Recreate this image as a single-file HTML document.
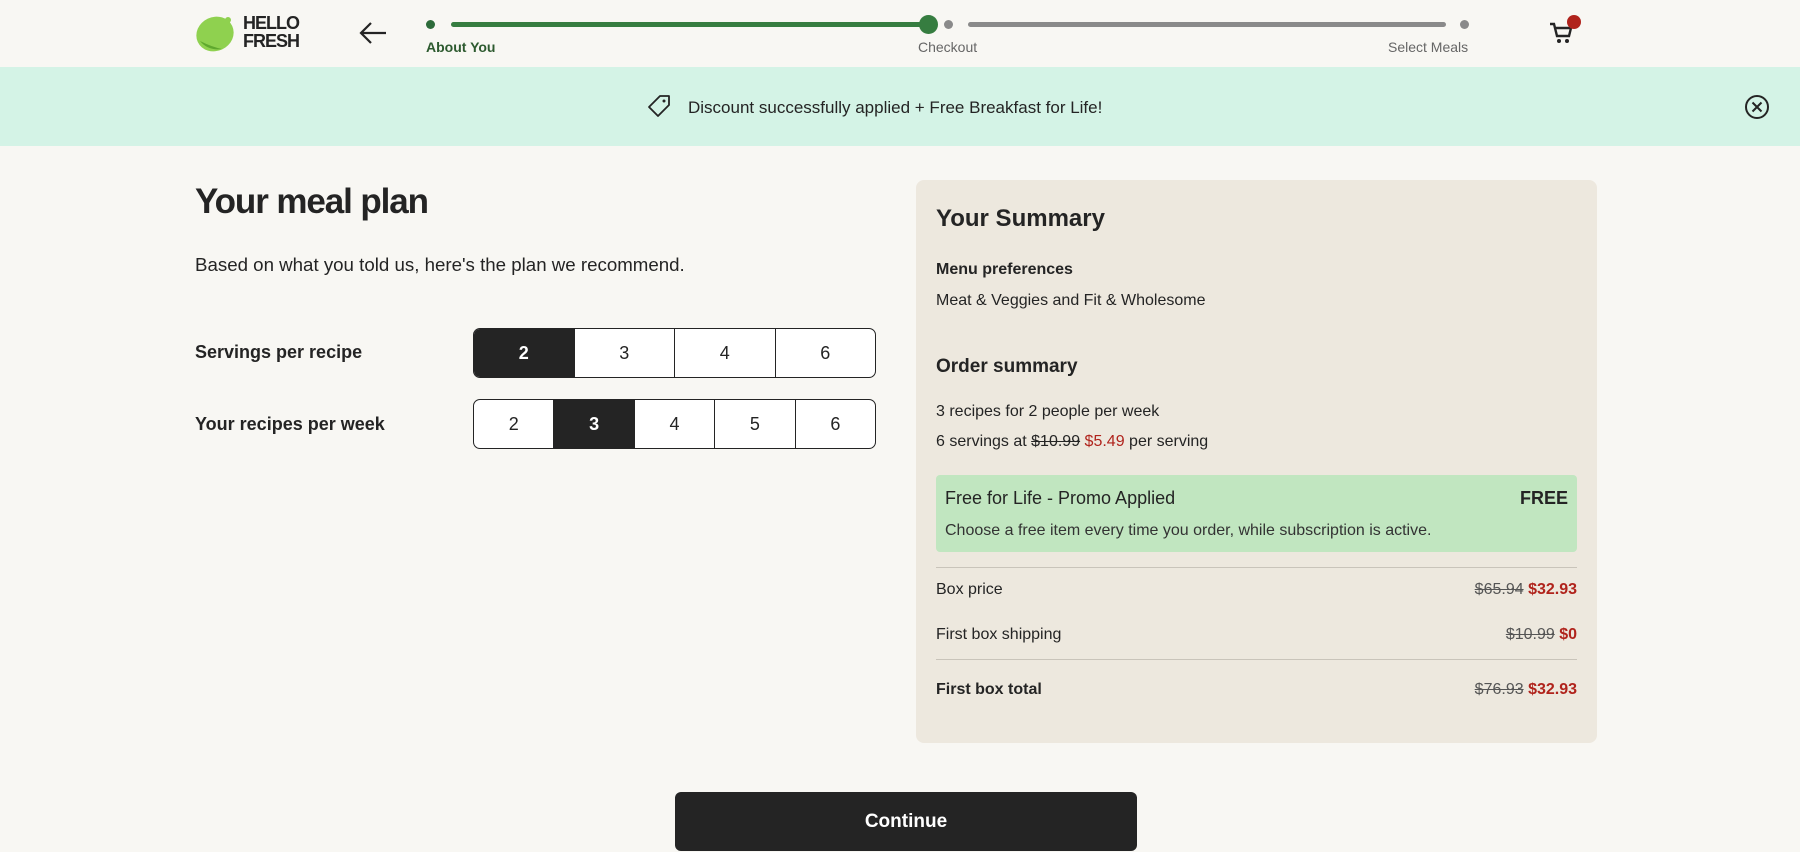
<!DOCTYPE html>
<html><head><meta charset="utf-8">
<style>
*{margin:0;padding:0;box-sizing:border-box}
body{width:1800px;height:852px;overflow:hidden;background:#f8f7f3;font-family:"Liberation Sans",sans-serif;color:#242424;position:relative}
.a{position:absolute;white-space:nowrap}
.hdr{position:absolute;left:0;top:0;width:1800px;height:67px;background:#f8f7f3}
.ban{position:absolute;left:0;top:67px;width:1800px;height:79px;background:#d4f3e6}
.seg{position:absolute;display:flex;border:1.5px solid #242424;border-radius:7px;overflow:hidden;background:#fff}
.seg div{flex:1;display:flex;align-items:center;justify-content:center;font-size:18px;border-left:1.5px solid #242424}
.seg div:first-child{border-left:none}
.seg .on{background:#242424;color:#fff;font-weight:bold}
.card{position:absolute;left:916px;top:180px;width:681px;height:563px;background:#ede8de;border-radius:8px}
.s{text-decoration:line-through;color:#555}
.r{color:#b0231c}
.rb{color:#b0231c;font-weight:bold}
</style></head><body>
<div class="hdr"></div>
<svg class="a" style="left:194px;top:13px" width="42" height="40" viewBox="0 0 42 40">
<ellipse cx="21" cy="21" rx="19" ry="17" transform="rotate(-25 21 21)" fill="#8fd14f"/>
<path d="M6 28 Q14 38 28 36 Q18 34 6 28Z" fill="#5fa82e"/>
<circle cx="34" cy="7" r="3" fill="#8fd14f"/>
</svg>
<div class="a" style="left:243px;top:14px;font-weight:900;font-size:18px;line-height:18px;letter-spacing:-1px">HELLO<br>FRESH</div>
<svg class="a" style="left:358px;top:21px" width="30" height="24" viewBox="0 0 30 24"><path d="M28 12H3M13 2L3 12l10 10" fill="none" stroke="#242424" stroke-width="2.2"/></svg>
<div class="a" style="left:426px;top:20px;width:9px;height:9px;border-radius:50%;background:#2d6b3a"></div>
<div class="a" style="left:451px;top:22px;width:471px;height:5px;border-radius:3px;background:#367d40"></div>
<div class="a" style="left:919px;top:15px;width:19px;height:19px;border-radius:50%;background:#367d40"></div>
<div class="a" style="left:944px;top:20px;width:9px;height:9px;border-radius:50%;background:#8a8a8a"></div>
<div class="a" style="left:968px;top:22px;width:478px;height:5px;border-radius:3px;background:#8a8a8a"></div>
<div class="a" style="left:1460px;top:20px;width:9px;height:9px;border-radius:50%;background:#8a8a8a"></div>
<div class="a" style="left:426px;top:39px;font-size:14px;font-weight:bold;color:#2d5a2f">About You</div>
<div class="a" style="left:918px;top:39px;font-size:14px;color:#666">Checkout</div>
<div class="a" style="left:1388px;top:39px;font-size:14px;color:#666">Select Meals</div>
<svg class="a" style="left:1548px;top:20px" width="26" height="26" viewBox="0 0 26 26"><path d="M2 4h4l3 12h12l2-8H8" fill="none" stroke="#242424" stroke-width="2.4"/><circle cx="11" cy="21" r="2" fill="#242424"/><circle cx="19" cy="21" r="2" fill="#242424"/></svg>
<div class="a" style="left:1567px;top:15px;width:14px;height:14px;border-radius:50%;background:#b0231c"></div>
<div class="ban"></div>
<svg class="a" style="left:647px;top:94px" width="24" height="24" viewBox="0 0 24 24"><path d="M13 2h9v9L11 22 2 13Z" fill="none" stroke="#242424" stroke-width="1.8" stroke-linejoin="round"/><circle cx="17" cy="7" r="1.5" fill="#242424"/></svg>
<div class="a" style="left:688px;top:98px;font-size:17px">Discount successfully applied + Free Breakfast for Life!</div>
<svg class="a" style="left:1744px;top:94px" width="26" height="26" viewBox="0 0 26 26"><circle cx="13" cy="13" r="11" fill="none" stroke="#242424" stroke-width="2"/><path d="M8.5 8.5l9 9M17.5 8.5l-9 9" stroke="#242424" stroke-width="2"/></svg>
<div class="a" style="left:195px;top:182px;font-size:35px;font-weight:bold;letter-spacing:-1.1px">Your meal plan</div>
<div class="a" style="left:195px;top:254px;font-size:18.7px">Based on what you told us, here's the plan we recommend.</div>
<div class="a" style="left:195px;top:342px;font-size:18px;font-weight:bold">Servings per recipe</div>
<div class="a" style="left:195px;top:414px;font-size:18px;font-weight:bold">Your recipes per week</div>
<div class="seg" style="left:473px;top:328px;width:403px;height:50px"><div class="on">2</div><div>3</div><div>4</div><div>6</div></div>
<div class="seg" style="left:473px;top:399px;width:403px;height:50px"><div>2</div><div class="on">3</div><div>4</div><div>5</div><div>6</div></div>
<div class="card"></div>
<div class="a" style="left:936px;top:205px;font-size:24px;font-weight:bold">Your Summary</div>
<div class="a" style="left:936px;top:261px;font-size:16px;font-weight:bold">Menu preferences</div>
<div class="a" style="left:936px;top:292px;font-size:16px">Meat &amp; Veggies and Fit &amp; Wholesome</div>
<div class="a" style="left:936px;top:356px;font-size:19px;font-weight:bold">Order summary</div>
<div class="a" style="left:936px;top:403px;font-size:16px">3 recipes for 2 people per week</div>
<div class="a" style="left:936px;top:433px;font-size:16px">6 servings at <span class="s" style="color:#242424">$10.99</span> <span class="r">$5.49</span> per serving</div>
<div class="a" style="left:936px;top:475px;width:641px;height:77px;background:#c1e6c0;border-radius:4px"></div>
<div class="a" style="left:945px;top:488px;font-size:18px">Free for Life - Promo Applied</div>
<div class="a" style="right:232px;top:488px;font-size:18px;font-weight:bold">FREE</div>
<div class="a" style="left:945px;top:522px;font-size:16px;color:#333">Choose a free item every time you order, while subscription is active.</div>
<div class="a" style="left:936px;top:567px;width:641px;height:1px;background:#c9c4ba"></div>
<div class="a" style="left:936px;top:581px;font-size:16px">Box price</div>
<div class="a" style="right:223px;top:581px;font-size:16px"><span class="s">$65.94</span> <span class="rb">$32.93</span></div>
<div class="a" style="left:936px;top:626px;font-size:16px">First box shipping</div>
<div class="a" style="right:223px;top:626px;font-size:16px"><span class="s">$10.99</span> <span class="rb">$0</span></div>
<div class="a" style="left:936px;top:659px;width:641px;height:1px;background:#c9c4ba"></div>
<div class="a" style="left:936px;top:681px;font-size:16px;font-weight:bold">First box total</div>
<div class="a" style="right:223px;top:681px;font-size:16px"><span class="s">$76.93</span> <span class="rb">$32.93</span></div>
<div class="a" style="left:675px;top:792px;width:462px;height:59px;background:#242424;border-radius:6px;color:#fff;font-size:19px;font-weight:bold;display:flex;align-items:center;justify-content:center">Continue</div>
</body></html>
